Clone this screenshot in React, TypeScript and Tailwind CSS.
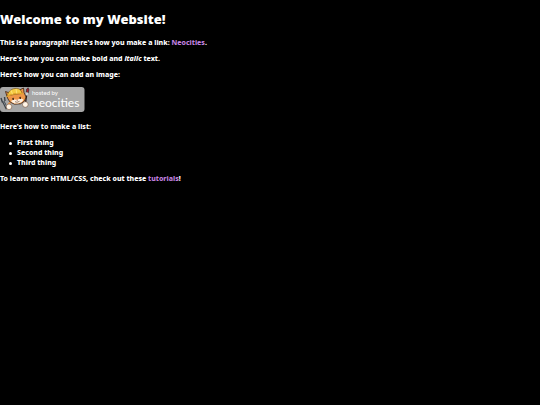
function HostedBadge() {
  return (
    <svg width="85" height="25" viewBox="0 0 85 25" role="img" aria-label="Hosted by Neocities">
      <rect width="84.5" height="25" rx="3" fill="#a6a6a6" />

      {/* Paintbrush */}
      <path d="M26.300 5l.4-3 1.500-1.200 .7 2-.6 3z" fill="#b3202c" stroke="#222" strokeWidth=".6" />
      <path d="M27.200 5.500l-.5 3" stroke="#ddd" strokeWidth="1.500" />
      <path d="M26.600 8.500l-1.200 8" stroke="#2b1a18" strokeWidth="1.300" />

      {/* Wrench */}
      <path d="M1 11l1.500 4.500M4.500 10l.5 4" fill="none" stroke="#3d4248" strokeWidth="1.400" />
      <path d="M3.300 14.500l3.700 7.500" stroke="#3d4248" strokeWidth="2.600" />
      <path d="M3.500 14.500l3 6" stroke="#7c838a" strokeWidth="1" />

      {/* Cat head */}
      <path d="M7 9.500l-1.500-5 4 1.500 9-2.500 5-2.500 .5 4.500 2 4.500-1.500 4-4 2.800-6 .4-4.500-2.200-2-3z" fill="#ef9748" stroke="#3a2113" strokeWidth=".8" />
      <path d="M11 14l3-1.500 3 .3 4-1.300 2.500 1-1.500 2.500-4 1.500-3.500 0-2.500-1.200z" fill="#fff2e2" />
      <path d="M13 10.800l.3 2M20 9.800l.4 2" stroke="#26140c" strokeWidth="1.300" />
      <path d="M16.300 13l1.700-.2-.7 1z" fill="#7d3425" />
      <path d="M15 14.700l2 .6 2.500-1" fill="none" stroke="#59301d" strokeWidth=".6" />

      {/* Hard hat */}
      <path d="M7.500 8.800c.3-4 3.500-6.800 7.500-7.300s6.500 1.500 7 5l-7 .8z" fill="#f5cb42" stroke="#6a4610" strokeWidth=".6" />
      <path d="M6.500 9.800c4-2.800 10-4 16.500-3.200" fill="none" stroke="#e0a52d" strokeWidth="1.300" />
      <path d="M11 3.200l1.500 4M16 2l.8 4.500" stroke="#ffe783" strokeWidth=".8" />

      {/* Paws */}
      <path d="M8.500 17.500l1.500-2" stroke="#ef9748" strokeWidth="2" />
      <circle cx="9" cy="19.800" r="2.800" fill="#fff5e7" stroke="#684128" strokeWidth=".5" />
      <circle cx="25.300" cy="17.500" r="2.800" fill="#fff5e7" stroke="#684128" strokeWidth=".5" />

      <g className="font-['Lato',sans-serif] font-normal" fill="#fff">
        <text x="32" y="8" fontSize="6">hosted by</text>
        <text x="32" y="20" fontSize="12">neocities</text>
      </g>
    </svg>
  )
}

const bullet =
  'flex items-center gap-[5px] before:size-[3px] before:rounded-full before:bg-white'

export default function App() {
  return (
    <main className="flex min-h-screen flex-col gap-[6px] bg-black pt-[10px] font-['Noto_Sans',sans-serif] text-[7px] leading-[10px] font-extrabold text-white">
      <h1 className="mb-1 text-[13px] leading-[18px] font-black">Welcome to my Website!</h1>

      <p>
        This is a paragraph! Here's how you make a link:{' '}
        <a href="https://neocities.org" className="text-[#bf7fdf]">Neocities</a>.
      </p>

      <p>
        Here's how you can make <strong className="font-extrabold">bold</strong> and <em>italic</em> text.
      </p>

      <p>Here's how you can add an image:</p>
      <div className="pt-px pb-1">
        <HostedBadge />
      </div>

      <p>Here's how to make a list:</p>

      <ul className="pl-[9px]">
        <li className={bullet}>First thing</li>
        <li className={bullet}>Second thing</li>
        <li className={bullet}>Third thing</li>
      </ul>

      <p>
        To learn more HTML/CSS, check out these{' '}
        <a href="https://neocities.org/tutorials" className="text-[#bf7fdf]">tutorials</a>!
      </p>
    </main>
  )
}
